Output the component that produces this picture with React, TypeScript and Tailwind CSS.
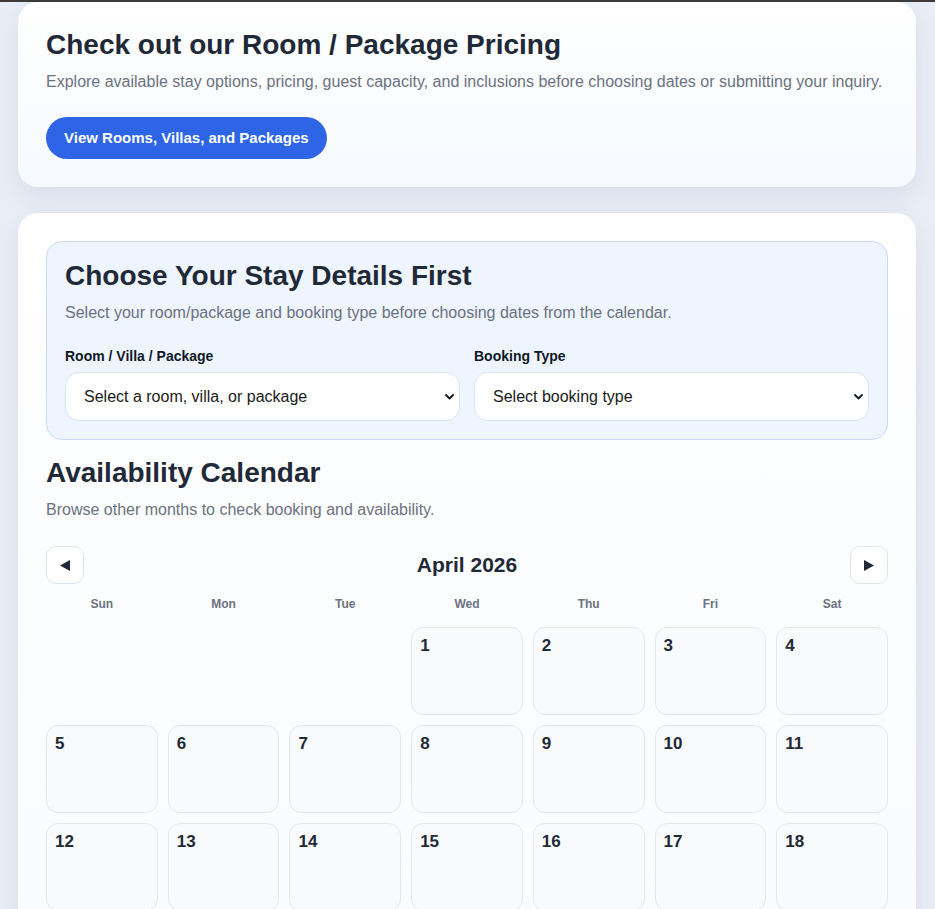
import React from 'react'

const weekdays = ['Sun', 'Mon', 'Tue', 'Wed', 'Thu', 'Fri', 'Sat']

// April 2026 starts on a Wednesday
const days: (number | null)[] = [null, null, null, ...Array.from({ length: 30 }, (_, i) => i + 1)]

const ChevronDown = () => (
    <svg className="w-[9px] h-[6px] text-gray-900" viewBox="0 0 9 6" fill="none">
        <path d="M1 1l3.5 3.5L8 1" stroke="currentColor" strokeWidth="1.8" strokeLinecap="round" strokeLinejoin="round" />
    </svg>
)

const Triangle = ({ dir }: { dir: 'left' | 'right' }) => (
    <svg className="w-[10px] h-[11px] text-[#1f2937]" viewBox="0 0 10 11" fill="currentColor">
        {dir === 'left' ? <polygon points="10,0 10,11 0,5.5" /> : <polygon points="0,0 0,11 10,5.5" />}
    </svg>
)

const SelectBox = ({ label, placeholder }: { label: string; placeholder: string }) => (
    <div className="flex flex-col">
        <span className="text-[14px] font-bold text-gray-900 mb-[7px] leading-[18px]">{label}</span>
        <div className="h-[49px] bg-white border border-[#d9e3f1] rounded-[14px] flex items-center justify-between pl-[18px] pr-[5px]">
            <span className="text-[16px] text-[#1a1a1a]">{placeholder}</span>
            <ChevronDown />
        </div>
    </div>
)

export default function App() {
    return (
        <div className="min-h-screen bg-[#e9edf5] font-['Liberation_Sans',Arial,sans-serif] text-[#1f2937]">
            <div className="h-[2px] bg-[#3c3c3c]" />
            <div className="pl-[18px] pr-[19px] pb-10 flex flex-col gap-[26px]">
                {/* Pricing */}
                <div className="rounded-[20px] bg-gradient-to-b from-white to-[#f6f9ff] shadow-[0_10px_28px_rgba(30,50,100,0.08)] px-[28px] pt-[26px] pb-[28px]">
                    <h2 className="text-[28px] font-bold leading-[34px] text-[#1f2937]">Check out our Room / Package Pricing</h2>
                    <p className="mt-[10px] text-[16px] leading-[20px] text-[#6b7280]">Explore available stay options, pricing, guest capacity, and inclusions before choosing dates or submitting your inquiry.</p>
                    <button className="mt-[25px] h-[42px] px-[18px] rounded-full bg-[#2e64e6] text-white text-[15px] font-bold">View Rooms, Villas, and Packages</button>
                </div>

                {/* Booking */}
                <div className="rounded-[20px] bg-gradient-to-b from-white to-[#f8faff] shadow-[0_10px_28px_rgba(30,50,100,0.08)] px-[28px] pt-[28px] pb-10">
                    <div className="rounded-[16px] bg-[#eef5ff] border border-[#c9dbf3] px-[18px] pt-[17px] pb-[18px]">
                        <h2 className="text-[28px] font-bold leading-[34px] text-[#1f2937]">Choose Your Stay Details First</h2>
                        <p className="mt-[10px] text-[16px] leading-[20px] text-[#6b7280]">Select your room/package and booking type before choosing dates from the calendar.</p>
                        <div className="mt-[24px] grid grid-cols-2 gap-[14px]">
                            <SelectBox label="Room / Villa / Package" placeholder="Select a room, villa, or package" />
                            <SelectBox label="Booking Type" placeholder="Select booking type" />
                        </div>
                    </div>

                    <h2 className="mt-[16px] text-[28px] font-bold leading-[34px] text-[#1f2937]">Availability Calendar</h2>
                    <p className="mt-[10px] text-[16px] leading-[20px] text-[#6b7280]">Browse other months to check booking and availability.</p>

                    <div className="mt-[26px] flex items-center justify-between">
                        <button className="w-[38px] h-[38px] rounded-[10px] bg-white border border-[#dde4ef] flex items-center justify-center">
                            <Triangle dir="left" />
                        </button>
                        <span className="text-[21px] font-bold text-[#1f2937]">April 2026</span>
                        <button className="w-[38px] h-[38px] rounded-[10px] bg-white border border-[#dde4ef] flex items-center justify-center">
                            <Triangle dir="right" />
                        </button>
                    </div>

                    <div className="mt-[13px] grid grid-cols-7 gap-[10px]">
                        {weekdays.map(d => (
                            <div key={d} className="text-center text-[12px] font-bold text-[#6b7280] leading-[14px]">{d}</div>
                        ))}
                    </div>

                    <div className="mt-[16px] grid grid-cols-7 gap-[10px]">
                        {days.map((d, i) => d === null ? (
                            <div key={`e${i}`} />
                        ) : (
                            <div key={d} className="h-[88px] rounded-[12px] bg-[#f9fafb] border border-[#e5e7eb] px-[8px] pt-[6px]">
                                <span className="text-[17px] font-bold text-[#1f2937] leading-[20px]">{d}</span>
                            </div>
                        ))}
                    </div>
                </div>
            </div>
        </div>
    )
}
